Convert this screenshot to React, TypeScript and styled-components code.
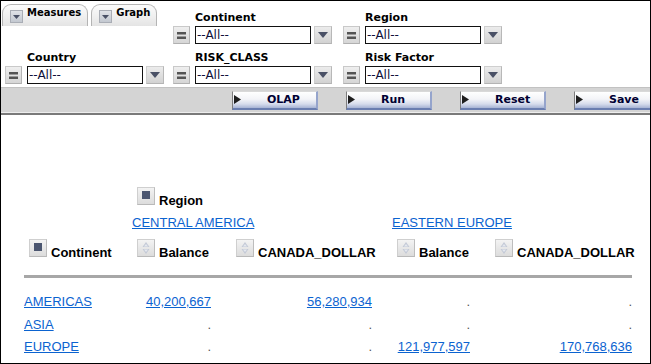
import React from 'react';
import styled, { createGlobalStyle } from 'styled-components';

const GlobalStyle = createGlobalStyle`
  html, body { margin: 0; padding: 0; background: #fff; }
  body { font-family: "DejaVu Sans", Verdana, sans-serif; }
`;

const Frame = styled.div`
  width: 651px;
  height: 364px;
  box-sizing: border-box;
  border: 1px solid #000;
  overflow: hidden;
  display: flex;
  flex-direction: column;
  background: #fff;
`;

/* ---------- filter panel ---------- */
const FilterPanel = styled.div`
  display: grid;
  grid-template-columns: 168px 170px 170px;
  padding: 3px 0 0 1px;
`;

const Tabs = styled.div`
  display: flex;
  gap: 3px;
  align-items: flex-start;
`;

const Tab = styled.div`
  height: 22px;
  box-sizing: border-box;
  display: flex;
  align-items: flex-start;
  gap: 4px;
  padding: 0 6px 0 7px;
  border: 1px solid #b4b4b4;
  border-bottom: none;
  border-radius: 9px 9px 0 0;
  background: linear-gradient(to bottom, #fbfbfb 0%, #eeeeee 60%, #e4e4e4 100%);
`;

const TabIcon = styled.span`
  width: 13px;
  height: 13px;
  margin-top: 5px;
  box-sizing: border-box;
  border: 1px solid #a9adb5;
  background: linear-gradient(to bottom, #dfe2e7, #c3c8d0);
  display: flex;
  align-items: center;
  justify-content: center;
`;

const TabText = styled.span`
  margin-top: 2px;
  font: bold 10px/12px "DejaVu Sans", Verdana, sans-serif;
  color: #000;
  white-space: nowrap;
`;

const FilterCell = styled.div`
  padding-left: 3px;
`;

const FilterLabel = styled.div`
  margin: 7px 0 2px 22px;
  font: bold 11px/13px "DejaVu Sans", Verdana, sans-serif;
  color: #000;
  white-space: nowrap;
`;

const ControlRow = styled.div`
  display: flex;
  align-items: center;
`;

const OpButton = styled.span`
  width: 17px;
  height: 18px;
  box-sizing: border-box;
  margin-right: 5px;
  border: 1px solid #c9c9c9;
  border-right-color: #b5b5b5;
  border-bottom-color: #b0b0b0;
  background: linear-gradient(to bottom, #efefef, #d6d6d6);
  display: flex;
  align-items: center;
  justify-content: center;
`;

const SelectBox = styled.span`
  width: 116px;
  height: 18px;
  box-sizing: border-box;
  border: 1px solid #111;
  background: #fff;
  padding-left: 1px;
  font: 12px/16px "DejaVu Sans", Verdana, sans-serif;
  color: #10103a;
  white-space: nowrap;
  overflow: hidden;
`;

const DropButton = styled.span`
  width: 18px;
  height: 18px;
  box-sizing: border-box;
  margin-left: 3px;
  border: 1px solid #cfcfcf;
  border-right-color: #b8b8b8;
  border-bottom-color: #b4b4b4;
  background: linear-gradient(to bottom, #ececec, #d2d2d2);
  display: flex;
  align-items: center;
  justify-content: center;
`;

/* ---------- toolbar ---------- */
const Toolbar = styled.div`
  margin-top: 3px;
  height: 26px;
  box-sizing: border-box;
  border-top: 1px solid #c2c2c2;
  border-bottom: 1px solid #ededed;
  background: #d4d4d4;
  display: flex;
  gap: 28px;
  padding: 3px 0 0 231px;
  overflow: hidden;
`;

const ActionButton = styled.div`
  flex: 0 0 86px;
  height: 19px;
  box-sizing: border-box;
  position: relative;
  border-top: 1px solid #d9d9d9;
  border-left: 1px solid #7d7d7d;
  border-right: 2px solid #95a4cc;
  border-bottom: 2px solid #6a7eb0;
  background: linear-gradient(to bottom, #ffffff 0%, #f3f4f8 45%, #d6dcec 75%, #a6b3d4 100%);
  padding-left: 34px;
  font: bold 11px/16px "DejaVu Sans", Verdana, sans-serif;
  color: #000033;
  white-space: nowrap;
`;

const ButtonArrow = styled.svg`
  position: absolute;
  left: 1px;
  top: 3px;
`;

const Divider = styled.div`
  height: 2px;
  background: #7a7a7a;
`;

/* ---------- pivot ---------- */
const Content = styled.div`
  flex: 1;
  padding: 72px 0 0 23px;
  font-family: "Liberation Sans", Arial, sans-serif;
`;

const PivotRow = styled.div<{ $mt?: number }>`
  display: grid;
  grid-template-columns: 88px 79px 141px 78px 142px;
  column-gap: 20px;
  margin-top: ${(p) => p.$mt ?? 0}px;
  font-size: 13px;
  line-height: 15px;
`;

const HeadCell = styled.div<{ $span?: string }>`
  grid-column: ${(p) => p.$span ?? 'auto'};
  font-weight: bold;
  color: #000;
  white-space: nowrap;
`;

const IconBox = styled.span`
  display: inline-block;
  position: relative;
  width: 18px;
  height: 18px;
  box-sizing: border-box;
  margin: 0 4px 0 5px;
  border: 1px solid #cfcfcf;
  border-right-color: #bdbdbd;
  border-bottom-color: #b9b9b9;
  background: linear-gradient(to bottom, #f3f3f3, #dcdcdc);
  vertical-align: baseline;
`;

const IconMark = styled.svg`
  position: absolute;
  left: 0;
  top: 0;
`;

const LinkText = styled.a`
  color: #0b63d0;
  text-decoration: underline;
  white-space: nowrap;
  cursor: pointer;
`;

const RegionCell = styled.div<{ $span: string }>`
  grid-column: ${(p) => p.$span};
`;

const Separator = styled.div`
  width: 608px;
  height: 3px;
  margin-top: 15px;
  background: #a7a7a7;
`;

const DataRow = styled(PivotRow)`
  padding: 4px 0 3.5px;
`;

const DataCell = styled.div<{ $right?: boolean }>`
  text-align: ${(p) => (p.$right ? 'right' : 'left')};
  color: #555;
`;

const DataBlock = styled.div`
  margin-top: 12px;
`;

/* ---------- icons ---------- */
const EqIcon = () => (
  <svg width="15" height="16" viewBox="0 0 15 16">
    <rect x="3" y="5" width="9" height="2.5" fill="#555" />
    <rect x="3" y="9.5" width="9" height="2.5" fill="#555" />
  </svg>
);

const DownTri = ({ w, h }: { w: number; h: number }) => (
  <svg width={w} height={h} viewBox={`0 0 ${w} ${h}`}>
    <polygon points={`0,0 ${w},0 ${w / 2},${h}`} fill="#4a5166" />
  </svg>
);

const SquareIcon = () => (
  <IconBox>
    <IconMark width="16" height="16" viewBox="0 0 16 16">
      <rect x="4" y="3" width="8" height="8" fill="#4b5670" />
    </IconMark>
  </IconBox>
);

const SortIcon = () => (
  <IconBox>
    <IconMark width="16" height="16" viewBox="0 0 16 16">
      <polygon points="8,2 11.5,7 4.5,7" fill="#c3c9d6" />
      <polygon points="8,14 11.5,9 4.5,9" fill="#c3c9d6" />
      <polygon points="8,4 10,6.5 6,6.5" fill="#e6e9ef" />
      <polygon points="8,12 10,9.5 6,9.5" fill="#e6e9ef" />
    </IconMark>
  </IconBox>
);

/* ---------- data ---------- */
const filters: { label: string; col: number; row: number }[] = [
  { label: 'Continent', col: 2, row: 1 },
  { label: 'Region', col: 3, row: 1 },
  { label: 'Country', col: 1, row: 2 },
  { label: 'RISK_CLASS', col: 2, row: 2 },
  { label: 'Risk Factor', col: 3, row: 2 },
];

const buttons = ['OLAP', 'Run', 'Reset', 'Save'];

const rows: { name: string; values: (string | null)[] }[] = [
  { name: 'AMERICAS', values: ['40,200,667', '56,280,934', null, null] },
  { name: 'ASIA', values: [null, null, null, null] },
  { name: 'EUROPE', values: [null, null, '121,977,597', '170,768,636'] },
];

const Filter = ({ label, col, row }: { label: string; col: number; row: number }) => (
  <FilterCell style={{ gridColumn: col, gridRow: row }}>
    <FilterLabel>{label}</FilterLabel>
    <ControlRow>
      <OpButton>
        <EqIcon />
      </OpButton>
      <SelectBox>--All--</SelectBox>
      <DropButton>
        <DownTri w={10} h={6} />
      </DropButton>
    </ControlRow>
  </FilterCell>
);

export default function App() {
  return (
    <>
      <GlobalStyle />
      <Frame>
        <FilterPanel>
          <Tabs style={{ gridColumn: 1, gridRow: 1 }}>
            {['Measures', 'Graph'].map((t) => (
              <Tab key={t}>
                <TabIcon>
                  <DownTri w={7} h={4} />
                </TabIcon>
                <TabText>{t}</TabText>
              </Tab>
            ))}
          </Tabs>
          {filters.map((f) => (
            <Filter key={f.label} {...f} />
          ))}
        </FilterPanel>

        <Toolbar>
          {buttons.map((b) => (
            <ActionButton key={b}>
              <ButtonArrow width="7" height="9" viewBox="0 0 7 9">
                <polygon points="0,0 7,4.5 0,9" fill="#1e1e1e" />
              </ButtonArrow>
              {b}
            </ActionButton>
          ))}
        </Toolbar>
        <Divider />

        <Content>
          <PivotRow>
            <HeadCell $span="2 / 6">
              <SquareIcon />
              Region
            </HeadCell>
          </PivotRow>
          <PivotRow $mt={7}>
            <RegionCell $span="2 / 4">
              <LinkText>CENTRAL AMERICA</LinkText>
            </RegionCell>
            <RegionCell $span="4 / 6">
              <LinkText>EASTERN EUROPE</LinkText>
            </RegionCell>
          </PivotRow>
          <PivotRow $mt={9}>
            <HeadCell>
              <SquareIcon />
              Continent
            </HeadCell>
            <HeadCell>
              <SortIcon />
              Balance
            </HeadCell>
            <HeadCell>
              <SortIcon />
              CANADA_DOLLAR
            </HeadCell>
            <HeadCell>
              <SortIcon />
              Balance
            </HeadCell>
            <HeadCell>
              <SortIcon />
              CANADA_DOLLAR
            </HeadCell>
          </PivotRow>
          <Separator />
          <DataBlock>
            {rows.map((r) => (
              <DataRow key={r.name}>
                <DataCell>
                  <LinkText>{r.name}</LinkText>
                </DataCell>
                {r.values.map((v, i) => (
                  <DataCell key={i} $right>
                    {v ? <LinkText>{v}</LinkText> : '.'}
                  </DataCell>
                ))}
              </DataRow>
            ))}
          </DataBlock>
        </Content>
      </Frame>
    </>
  );
}
